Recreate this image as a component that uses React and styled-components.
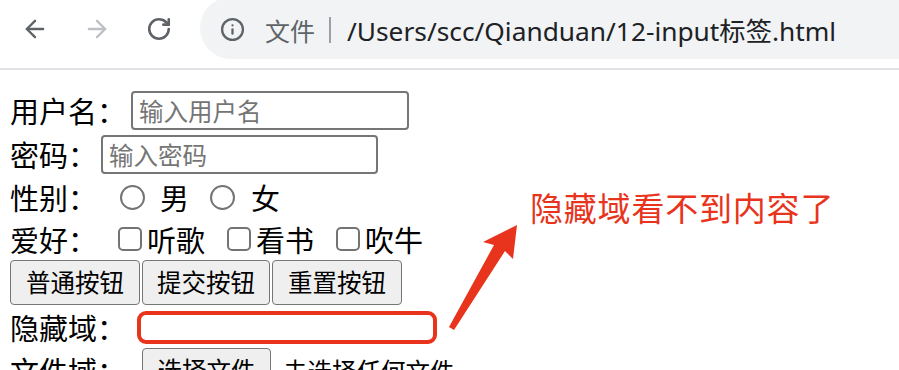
import React from "react";
import styled, { createGlobalStyle } from "styled-components";
import { ArrowLeft, ArrowRight, RotateCw, Info } from "lucide-react";

const GlobalStyle = createGlobalStyle`
  html, body {
    margin: 0;
    padding: 0;
    background: #ffffff;
  }
  body {
    font-family: "Noto Sans CJK SC", "Noto Sans", sans-serif;
  }
`;

const Window = styled.div`
  position: relative;
  width: 899px;
  height: 370px;
  overflow: hidden;
  background: #fff;
`;

const Toolbar = styled.div`
  display: flex;
  align-items: flex-start;
  height: 68px;
  border-bottom: 2px solid #dfe1e5;
  box-sizing: content-box;
`;

const NavButton = styled.div`
  width: ${(p) => p.$w}px;
  height: 58px;
  display: flex;
  align-items: center;
  justify-content: center;
  color: ${(p) => (p.$disabled ? "#bdc1c6" : "#5f6368")};
`;

const Omnibox = styled.div`
  flex: 1;
  height: 62px;
  margin-top: -3px;
  margin-left: 6px;
  border-radius: 31px 0 0 31px;
  background: #f1f3f4;
  display: flex;
  align-items: center;
  padding-left: 20px;
  padding-top: 3px;
  box-sizing: border-box;
`;

const Scheme = styled.span`
  margin-left: 20px;
  font-size: 25px;
  color: #5f6368;
  font-family: "Noto Sans CJK SC", sans-serif;
`;

const Divider = styled.span`
  width: 2px;
  height: 26px;
  background: #9aa0a6;
  margin: 0 16px 0 14px;
`;

const Url = styled.span`
  font-size: 26.3px;
  color: #202124;
  font-family: "Noto Sans", "Noto Sans CJK SC", sans-serif;
`;

const Page = styled.div`
  padding: 18px 0 0 10px;
  font-size: 29px;
  color: #000;
  font-family: "Noto Sans CJK SC", sans-serif;
`;

const Row = styled.div`
  display: flex;
  align-items: ${(p) => (p.$top ? "flex-start" : "center")};
  height: ${(p) => p.$h}px;
  white-space: nowrap;
`;

const Label = styled.span`
  line-height: ${(p) => (p.$lh ? `${p.$lh}px` : 1)};
`;

const TextInput = styled.input`
  width: ${(p) => p.$w}px;
  height: 39px;
  margin-left: ${(p) => p.$ml}px;
  box-sizing: border-box;
  border: 2px solid #767676;
  border-radius: 4px;
  padding: 0 6px;
  font-size: 24.5px;
  font-family: "Noto Sans CJK SC", sans-serif;
  &::placeholder {
    color: #757575;
  }
`;

const Radio = styled.input.attrs({ type: "radio" })`
  appearance: none;
  width: 25px;
  height: 25px;
  margin: 0 ${(p) => p.$mr}px 0 ${(p) => p.$ml}px;
  border: 2px solid #747474;
  border-radius: 50%;
  background: #fff;
  box-sizing: border-box;
`;

const Check = styled.input.attrs({ type: "checkbox" })`
  appearance: none;
  width: 24px;
  height: 24px;
  margin: 0 ${(p) => p.$mr}px 0 ${(p) => p.$ml}px;
  border: 2px solid #747474;
  border-radius: 5px;
  background: #fff;
  box-sizing: border-box;
`;

const Option = styled.span`
  line-height: 1;
`;

const ButtonRow = styled.div`
  display: flex;
  gap: 2px;
  height: 46px;
`;

const Button = styled.button`
  width: ${(p) => p.$w || 130}px;
  height: 45px;
  margin-left: ${(p) => p.$ml || 0}px;
  border: 1.5px solid #767676;
  border-radius: 4px;
  background: #efefef;
  font-size: 24.5px;
  font-family: "Noto Sans CJK SC", sans-serif;
  color: #000;
  padding: 0;
  line-height: 1;
`;

const Highlight = styled.span`
  width: 300px;
  height: 33px;
  margin-left: 11px;
  border: 4px solid #e8341c;
  border-radius: 9px;
  box-sizing: border-box;
`;

const FileHint = styled.span`
  margin-left: 12px;
  font-size: 24.5px;
  line-height: 45px;
`;

const Note = styled.div`
  position: absolute;
  left: 530px;
  top: 183px;
  font-size: 33px;
  color: #e8341c;
  font-family: "Noto Sans CJK SC", sans-serif;
  letter-spacing: 0.8px;
`;

const ArrowSvg = styled.svg`
  position: absolute;
  left: 0;
  top: 0;
  pointer-events: none;
`;

export default function App() {
  return (
    <Window>
      <GlobalStyle />
      <Toolbar>
        <NavButton $w={70}>
          <ArrowLeft size={28} strokeWidth={2} />
        </NavButton>
        <NavButton $w={54} $disabled>
          <ArrowRight size={28} strokeWidth={2} />
        </NavButton>
        <NavButton $w={70}>
          <RotateCw size={26} strokeWidth={2.4} />
        </NavButton>
        <Omnibox>
          <Info size={25} strokeWidth={2.2} color="#5f6368" />
          <Scheme>文件</Scheme>
          <Divider />
          <Url>/Users/scc/Qianduan/12-input标签.html</Url>
        </Omnibox>
      </Toolbar>

      <Page>
        <Row $h={44}>
          <Label>用户名：</Label>
          <TextInput $w={278} $ml={5} placeholder="输入用户名" />
        </Row>
        <Row $h={44}>
          <Label>密码：</Label>
          <TextInput $w={277} $ml={4} placeholder="输入密码" />
        </Row>
        <Row $h={42}>
          <Label>性别：</Label>
          <Radio name="sex" $ml={23} $mr={15} />
          <Option>男</Option>
          <Radio name="sex" $ml={21} $mr={16} />
          <Option>女</Option>
        </Row>
        <Row $h={42}>
          <Label>爱好：</Label>
          <Check $ml={21} $mr={5} />
          <Option>听歌</Option>
          <Check $ml={22} $mr={5} />
          <Option>看书</Option>
          <Check $ml={22} $mr={5} />
          <Option>吹牛</Option>
        </Row>
        <ButtonRow>
          <Button>普通按钮</Button>
          <Button $w={128}>提交按钮</Button>
          <Button>重置按钮</Button>
        </ButtonRow>
        <Row $h={42}>
          <Label>隐藏域：</Label>
          <Highlight />
        </Row>
        <Row $h={46} $top>
          <Label $lh={45}>文件域：</Label>
          <Button $w={129} $ml={16}>选择文件</Button>
          <FileHint>未选择任何文件</FileHint>
        </Row>
      </Page>

      <Note>隐藏域看不到内容了</Note>
      <ArrowSvg width="899" height="370" viewBox="0 0 899 370">
        <polygon
          points="517,225 513,259 505,251 454,330 449,327 494,245 483,242"
          fill="#e8341c"
          strokeLinejoin="round"
        />
      </ArrowSvg>
    </Window>
  );
}
